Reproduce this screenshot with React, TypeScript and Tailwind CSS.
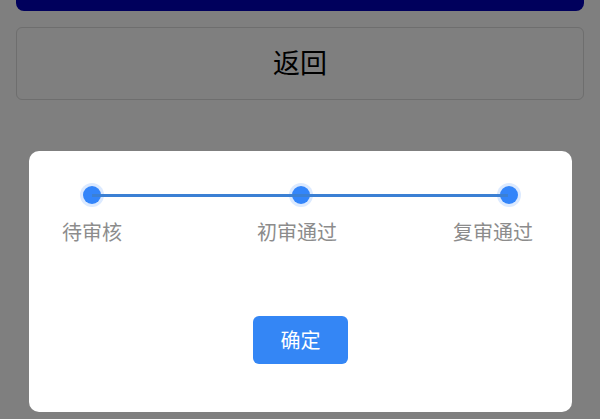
import React from 'react'

function Dot() {
  return (
    <div className="h-6 w-6 rounded-full bg-[#dceaff] p-[3px]">
      <div className="h-full w-full rounded-full bg-[#3385fa]" />
    </div>
  )
}

function Stepper() {
  return (
    <div className="pt-[32px]">
      <div className="relative flex justify-between px-[51px]">
        {/* track behind the dots */}
        <div className="absolute left-[63px] right-[64px] top-[11px] h-[3px] bg-[#3b80d4]" />
        <Dot />
        <Dot />
        <Dot />
      </div>
      <div className="mt-[10px] flex pl-[33px] text-[20px] leading-[30px] text-[#8c8c8c]">
        <span>待审核</span>
        <span className="ml-[135px]">初审通过</span>
        <span className="ml-[116px]">复审通过</span>
      </div>
    </div>
  )
}

export default function App() {
  return (
    <div
      className="relative h-[419px] w-[600px] overflow-hidden bg-[#7f7f7f] px-4"
      style={{ fontFamily: '"Noto Sans CJK SC", "Noto Sans", sans-serif' }}
    >
      <div className="h-[11px] rounded-b-lg bg-[#00005c]" />
      <button className="mt-[16px] flex h-[73px] w-full items-center justify-center rounded-md border border-[#6e6e6e] bg-[#7f7f7f] pb-[2px] text-[27px] text-black">
        返回
      </button>

      {/* dialog */}
      <div className="absolute left-[29px] top-[151px] h-[261px] w-[543px] rounded-[10px] bg-white">
        <Stepper />
        <div className="mt-[69px] flex justify-center">
          <button className="h-[48px] w-[95px] rounded-md bg-[#3486f5] text-[20px] text-white">确定</button>
        </div>
      </div>
    </div>
  )
}
